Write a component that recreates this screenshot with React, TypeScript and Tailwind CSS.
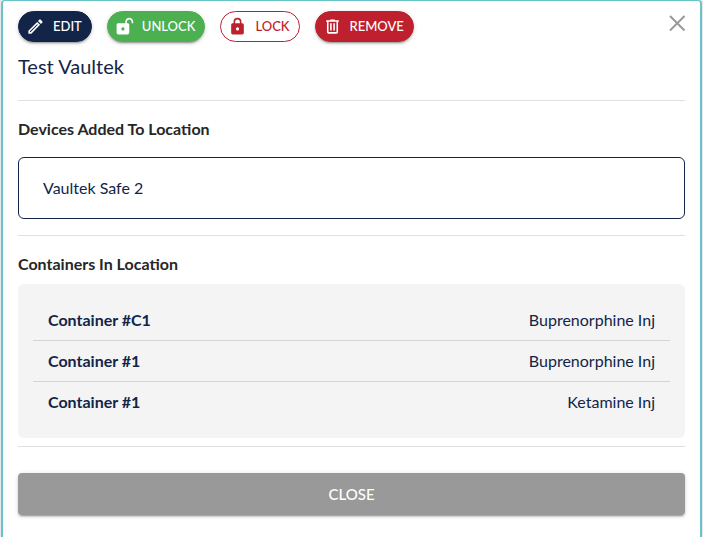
import { useState } from "react";
import clsx from "clsx";

const icons = {
  edit: "M14.06,9L15,9.94L5.92,19H5V18.08L14.06,9M17.66,3C17.41,3 17.15,3.1 16.96,3.29L15.13,5.12L18.88,8.87L20.71,7.04C21.1,6.65 21.1,6 20.71,5.63L18.37,3.29C18.17,3.09 17.92,3 17.66,3M14.06,6.19L3,17.25V21H6.75L17.81,9.94L14.06,6.19Z",
  unlock:
    "M18 1C15.24 1 13 3.24 13 6V8H4C2.9 8 2 8.89 2 10V20C2 21.11 2.9 22 4 22H16C17.11 22 18 21.11 18 20V10C18 8.9 17.11 8 16 8H15V6C15 4.34 16.34 3 18 3C19.66 3 21 4.34 21 6V8H23V6C23 3.24 20.76 1 18 1M10 13C11.1 13 12 13.89 12 15C12 16.11 11.11 17 10 17C8.9 17 8 16.11 8 15C8 13.9 8.9 13 10 13Z",
  lock: "M12,17A2,2 0 0,0 14,15C14,13.89 13.1,13 12,13A2,2 0 0,0 10,15A2,2 0 0,0 12,17M18,8A2,2 0 0,1 20,10V20A2,2 0 0,1 18,22H6A2,2 0 0,1 4,20V10C4,8.89 4.9,8 6,8H7V6A5,5 0 0,1 12,1A5,5 0 0,1 17,6V8H18M12,3A3,3 0 0,0 9,6V8H15V6A3,3 0 0,0 12,3Z",
  remove:
    "M9,3V4H4V6H5V19A2,2 0 0,0 7,21H17A2,2 0 0,0 19,19V6H20V4H15V3H9M7,6H17V19H7V6M9,8V17H11V8H9M13,8V17H15V8H13Z",
};

const raised =
  "shadow-[0_3px_1px_-2px_rgba(0,0,0,0.2),0_2px_2px_rgba(0,0,0,0.14),0_1px_5px_rgba(0,0,0,0.12)]";

const actions = [
  { icon: icons.edit, label: "Edit", style: clsx("border-[#122548] bg-[#122548] text-white", raised) },
  { icon: icons.unlock, label: "Unlock", style: clsx("border-[#4caf50] bg-[#4caf50] text-white", raised) },
  { icon: icons.lock, label: "Lock", style: "border-[#be202e] text-[#be202e]" },
  { icon: icons.remove, label: "Remove", style: clsx("border-[#be202e] bg-[#be202e] text-white", raised) },
];

const containers = [
  { id: 1, name: "Container #C1", drug: "Buprenorphine Inj" },
  { id: 2, name: "Container #1", drug: "Buprenorphine Inj" },
  { id: 3, name: "Container #1", drug: "Ketamine Inj" },
];

export default function App() {
  const [open, setOpen] = useState(true);

  if (!open) return null;

  return (
    <div className="min-h-screen flex bg-[#e8e8e8] px-px font-['Lato',sans-serif] text-base text-[#122548]">
      <main className="flex-1 bg-white border-2 border-t border-b-0 border-[#67c5c9] rounded-t px-[15px] pt-[10px]">
        <div className="flex items-start justify-between">
          <div className="flex gap-[15px]">
            {actions.map(({ icon, label, style }) => (
              <button
                key={label}
                type="button"
                className={clsx(
                  "h-[31px] pl-[7px] pr-[9px] flex items-center gap-2 border rounded-full text-[13px] font-medium uppercase",
                  style
                )}
              >
                <svg viewBox="0 0 24 24" className="size-[19px]" fill="currentColor" aria-hidden="true">
                  <path d={icon} />
                </svg>
                {label}
              </button>
            ))}
          </div>
          <button
            type="button"
            aria-label="Close dialog"
            onClick={() => setOpen(false)}
            className="mt-1 text-[#999999]"
          >
            <svg viewBox="0 0 16 16" className="size-4" fill="none" stroke="currentColor" strokeWidth="2">
              <path d="M1 1L15.5 15.5M15.5 1L1 15.5" />
            </svg>
          </button>
        </div>

        <h1 className="mt-2 text-xl leading-8">Test Vaultek</h1>
        <hr className="mt-[18px] border-[#dfdfdf]" />

        <h2 className="mt-4 font-bold text-[#262626]">Devices Added To Location</h2>
        <div className="mt-4 px-6 py-[18px] border border-[#122548] rounded-md">Vaultek Safe 2</div>
        <hr className="mt-4 border-[#dfdfdf]" />

        <h2 className="mt-4 font-bold text-[#262626]">Containers In Location</h2>
        <ul className="mt-2 px-[15px] py-4 bg-[#f4f4f4] rounded-md divide-y divide-[#d4d4d4]">
          {containers.map((c) => (
            <li key={c.id} className="px-[15px] py-2 flex justify-between">
              <span className="font-bold">{c.name}</span>
              <span>{c.drug}</span>
            </li>
          ))}
        </ul>
        <hr className="mt-2 border-[#dfdfdf]" />

        <button
          type="button"
          onClick={() => setOpen(false)}
          className={clsx(
            "mt-[26px] w-full h-[42px] rounded bg-[#999999] text-white text-[15px] font-medium uppercase",
            raised
          )}
        >
          Close
        </button>
      </main>
    </div>
  );
}
